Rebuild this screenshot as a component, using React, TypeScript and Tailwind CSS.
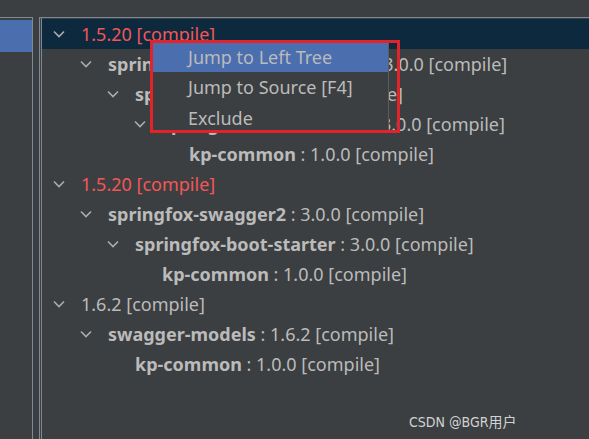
import React from 'react';

type Row = { level: number; name: string; bold?: boolean; red?: boolean; suffix?: string; expanded?: boolean };

const rows: Row[] = [
  { level: 0, name: '1.5.20 [compile]', red: true, expanded: true },
  { level: 1, name: 'springfox-swagger-commons', bold: true, suffix: ' : 3.0.0 [compile]', expanded: true },
  { level: 2, name: 'springfox-core', bold: true, suffix: ' : 3.0.0 [compile]', expanded: true },
  { level: 3, name: 'springfox-schema-core', bold: true, suffix: ' : 3.0.0 [compile]', expanded: true },
  { level: 4, name: 'kp-common', bold: true, suffix: ' : 1.0.0 [compile]' },
  { level: 0, name: '1.5.20 [compile]', red: true, expanded: true },
  { level: 1, name: 'springfox-swagger2', bold: true, suffix: ' : 3.0.0 [compile]', expanded: true },
  { level: 2, name: 'springfox-boot-starter', bold: true, suffix: ' : 3.0.0 [compile]', expanded: true },
  { level: 3, name: 'kp-common', bold: true, suffix: ' : 1.0.0 [compile]' },
  { level: 0, name: '1.6.2 [compile]', expanded: true },
  { level: 1, name: 'swagger-models', bold: true, suffix: ' : 1.6.2 [compile]', expanded: true },
  { level: 2, name: 'kp-common', bold: true, suffix: ' : 1.0.0 [compile]' },
];

const indents = ['pl-[11px]', 'pl-[38px]', 'pl-[65px]', 'pl-[92px]', 'pl-[119px]'];

const Chevron = () => (
  <svg width="12" height="8" viewBox="0 0 12 8" className="shrink-0">
    <polyline points="1,1.5 6,6.5 11,1.5" fill="none" stroke="#a9adb0" strokeWidth="1.6" />
  </svg>
);

const TreeRow: React.FC<{ row: Row; selected: boolean }> = ({ row, selected }) => (
  <div className={`h-[30px] flex items-center whitespace-nowrap ${indents[row.level]} ${selected ? 'bg-[#0d293e]' : ''}`}>
    <div className="w-[12px] flex justify-center">{row.expanded ? <Chevron /> : null}</div>
    <span className={`ml-[16px] ${row.red ? 'text-[#f25757]' : 'text-[#bbbbbb]'} ${row.bold ? 'font-bold' : ''}`}>{row.name}</span>
    {row.suffix && <span className="text-[#bbbbbb] whitespace-pre">{row.suffix}</span>}
  </div>
);

const App: React.FC = () => {
  return (
    <div className="relative w-[589px] h-[439px] overflow-hidden bg-[#3c3f41] text-[18px] flex flex-col" style={{ fontFamily: '"Noto Sans", "Open Sans", sans-serif' }}>
      <div className="h-[17px] shrink-0" />
      <div className="flex flex-1">
        <div className="w-[33px] border-t border-r border-[#7d8a96] pt-[2px]">
          <div className="h-[32px] bg-[#4b6eaf]" />
        </div>
        <div className="w-[6px]" />
        <div className="flex-1 border-t border-l border-[#7d8a96] pl-px">
          <div className="h-full border-l border-[#7d8a96] pt-[1px]">
            {rows.map((r, i) => (
              <TreeRow key={i} row={r} selected={i === 0} />
            ))}
          </div>
        </div>
      </div>

      <div className="absolute left-[150px] top-[40px] w-[250px] h-[93px] border-[3px] border-[#e3232a]">
        <div className="w-[236px] h-full bg-[#3c3f41] border-r border-[#5b5e61] text-[#bbbbbb] text-[18px]">
          <div className="h-[29px] bg-[#4b6eaf] flex items-center pl-[35px]">Jump to Left Tree</div>
          <div className="h-[31px] flex items-center pl-[35px]">Jump to Source [F4]</div>
          <div className="h-[30px] flex items-center pl-[35px]">Exclude</div>
        </div>
      </div>

      <div className="absolute left-[409px] top-[412px] text-[14px] text-[#d2d2d2]" style={{ fontFamily: '"Liberation Sans Narrow", "DejaVu Sans Condensed", "Noto Sans CJK SC", sans-serif' }}>
        CSDN @BGR用户
      </div>
    </div>
  );
};

export default App;
